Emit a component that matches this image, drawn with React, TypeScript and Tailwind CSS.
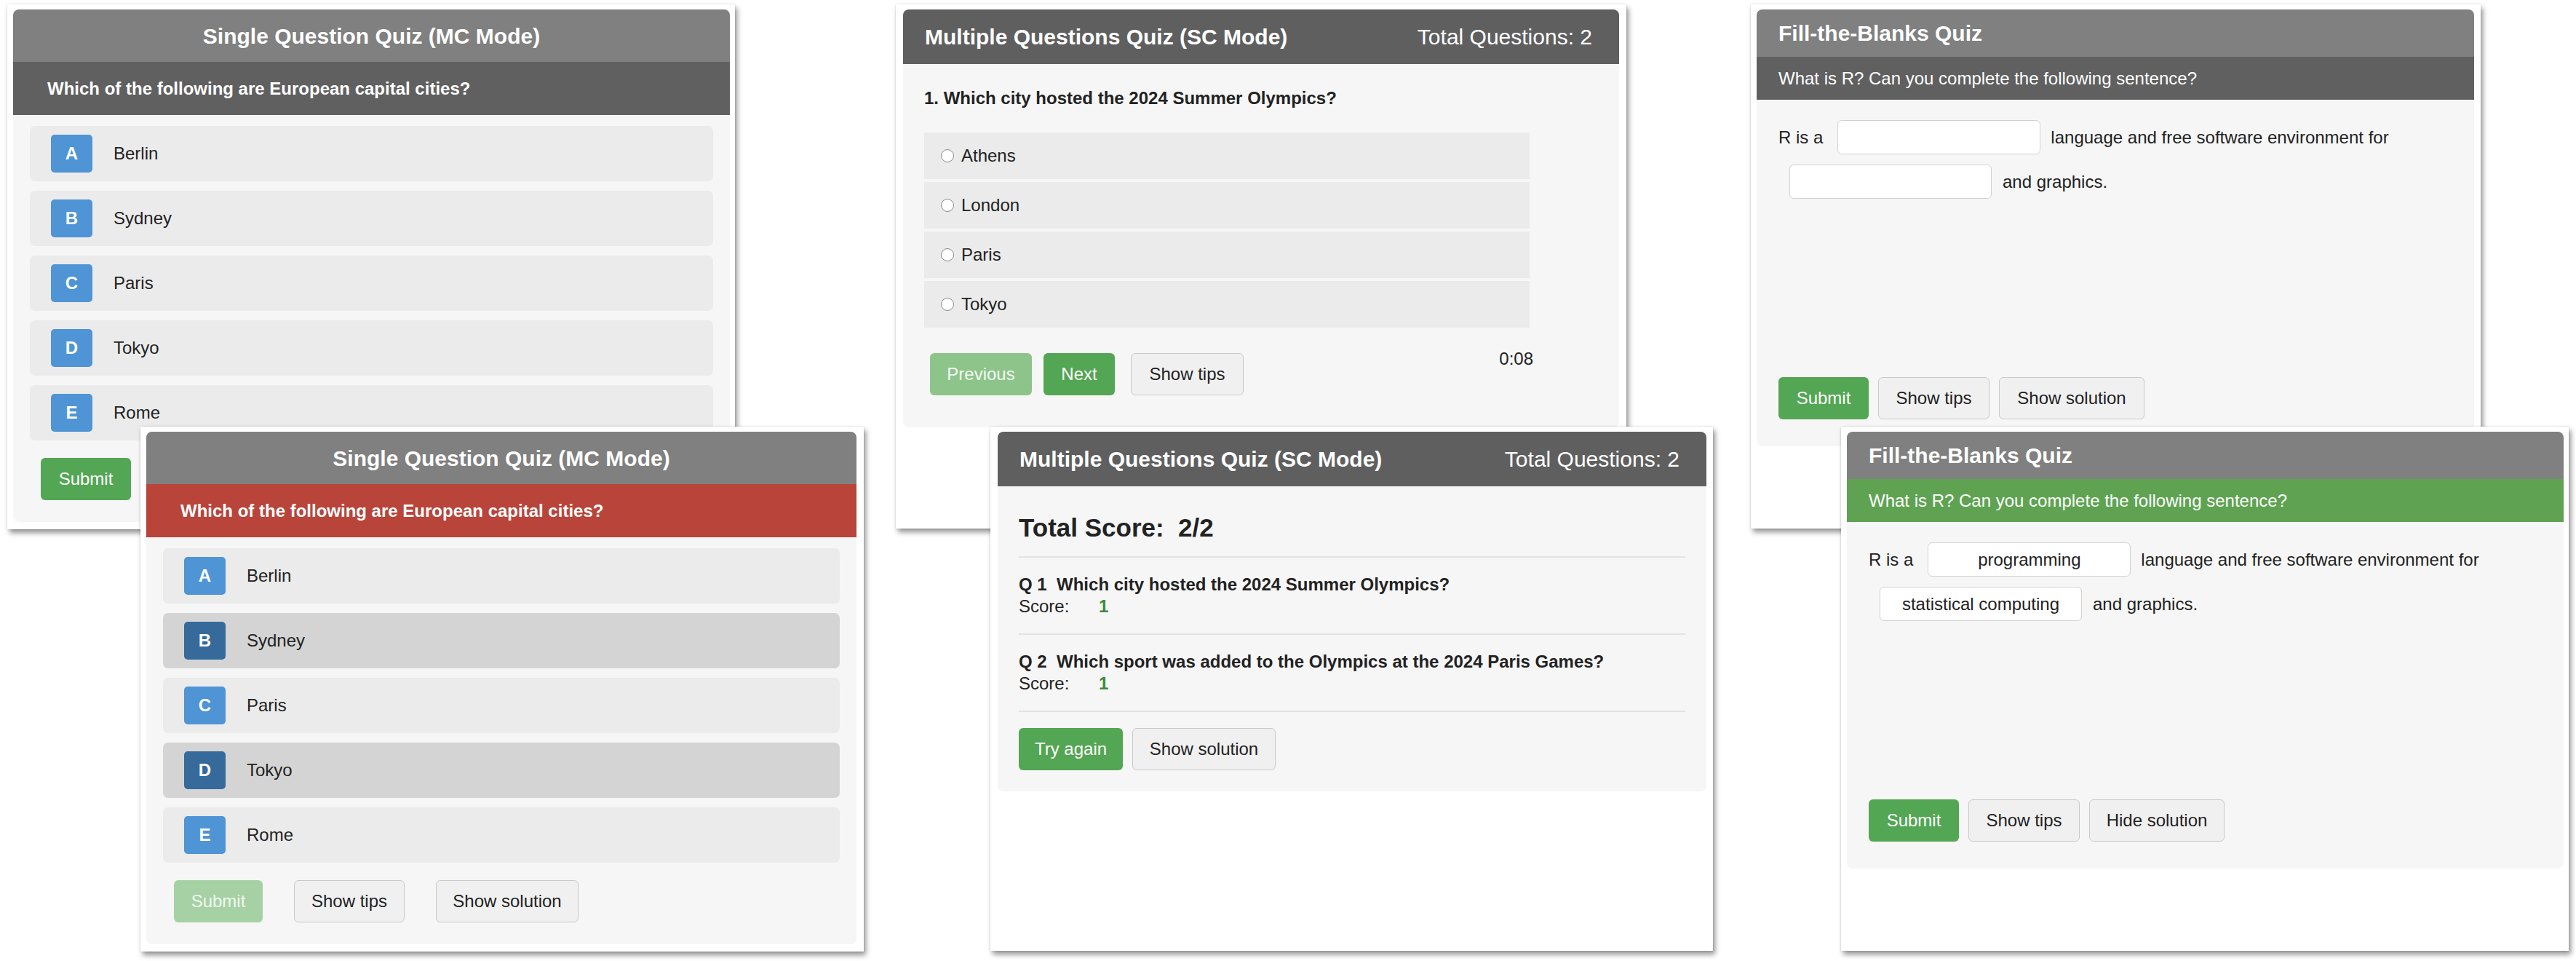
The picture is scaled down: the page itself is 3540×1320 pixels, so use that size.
import React from "react";

type BtnKind = "green" | "faded" | "soft" | "plain";

const btnTone: Record<BtnKind, string> = {
  green: "bg-[#53a653] text-white",
  faded: "bg-[#a6d1a4] text-[#f2f8f1]",
  soft: "bg-[#8cc48a] text-[#f4faf3]",
  plain: "bg-[#f0f0f0] border border-[#c9c9c9] text-[#222]",
};

function Btn({ label, kind = "plain", w }: { label: string; kind?: BtnKind; w: string }) {
  return (
    <button
      className={`h-[58px] rounded-[6px] text-[24px] flex items-center justify-center shrink-0 ${btnTone[kind]} ${w}`}
    >
      {label}
    </button>
  );
}

// white screenshot frame with the drop shadow around each widget
function Frame({ pos, children }: { pos: string; children: React.ReactNode }) {
  return (
    <div
      className={`absolute bg-white pt-[7px] shadow-[0_0_2px_rgba(0,0,0,0.18),3px_5px_7px_rgba(0,0,0,0.42)] ${pos}`}
    >
      {children}
    </div>
  );
}

const CITIES = ["Berlin", "Sydney", "Paris", "Tokyo", "Rome"];
const LETTERS = ["A", "B", "C", "D", "E"];

function SingleQuiz({
  width,
  barTone,
  picked = [],
  children,
}: {
  width: string;
  barTone: string;
  picked?: number[];
  children: React.ReactNode;
}) {
  return (
    <div className={`rounded-[8px] overflow-hidden bg-[#f6f6f6] pb-[30px] ${width}`}>
      <div className="h-[72px] bg-[#808080] flex items-center justify-center text-white text-[30px] font-bold">
        Single Question Quiz (MC Mode)
      </div>
      <div className={`h-[73px] flex items-center pl-[47px] text-white text-[24px] font-bold ${barTone}`}>
        Which of the following are European capital cities?
      </div>
      <div className="px-[23px] pt-[15px] flex flex-col gap-[13px]">
        {CITIES.map((city, i) => {
          const on = picked.includes(i);
          return (
            <div
              key={city}
              className={`h-[76px] rounded-[7px] flex items-center pl-[29px] ${on ? "bg-[#d4d4d4]" : "bg-[#ebebeb]"}`}
            >
              <span
                className={`w-[57px] h-[52px] rounded-[5px] flex items-center justify-center text-white text-[24px] font-bold ${
                  on ? "bg-[#356a9b]" : "bg-[#4f94d5]"
                }`}
              >
                {LETTERS[i]}
              </span>
              <span className="ml-[29px] text-[24px] text-[#222]">{city}</span>
            </div>
          );
        })}
      </div>
      <div className="mt-[24px] pl-[38px] flex gap-[43px]">{children}</div>
    </div>
  );
}

function MultiHeader() {
  return (
    <div className="h-[75px] bg-[#5f5f5f] flex items-center justify-between pl-[30px] pr-[37px] text-white text-[30px]">
      <span className="font-bold">Multiple Questions Quiz (SC Mode)</span>
      <span>Total Questions: 2</span>
    </div>
  );
}

function MultiQuiz() {
  return (
    <div className="w-[984px] rounded-[8px] overflow-hidden bg-[#f6f6f6] pb-[44px]">
      <MultiHeader />
      <div className="pl-[29px] pt-[31px]">
        <div className="text-[24px] leading-[32px] font-bold text-[#222]">
          1. Which city hosted the 2024 Summer Olympics?
        </div>
        <div className="mt-[31px] w-[832px] flex flex-col gap-[4px]">
          {["Athens", "London", "Paris", "Tokyo"].map((c) => (
            <div key={c} className="h-[64px] bg-[#ebebeb] flex items-center pl-[23px]">
              <span className="w-[18px] h-[18px] rounded-full border border-[#8a8a8a] bg-white" />
              <span className="ml-[10px] text-[24px] text-[#222]">{c}</span>
            </div>
          ))}
        </div>
        <div className="mt-[35px] w-[837px] flex items-start pl-[8px]">
          <Btn label="Previous" kind="soft" w="w-[140px]" />
          <div className="ml-[16px]">
            <Btn label="Next" kind="green" w="w-[98px]" />
          </div>
          <div className="ml-[22px]">
            <Btn label="Show tips" w="w-[155px]" />
          </div>
          <span className="ml-auto -mt-[8px] text-[24px] leading-[32px] text-[#222]">0:08</span>
        </div>
      </div>
    </div>
  );
}

function QuizResult() {
  const rows = [
    "Which city hosted the 2024 Summer Olympics?",
    "Which sport was added to the Olympics at the 2024 Paris Games?",
  ];
  return (
    <div className="w-[974px] rounded-[8px] overflow-hidden bg-[#f6f6f6] pb-[29px]">
      <MultiHeader />
      <div className="px-[29px] pt-[36px]">
        <div className="text-[35px] leading-[42px] font-bold text-[#222]">Total Score:&nbsp; 2/2</div>
        <div className="mt-[18px] h-[2px] bg-[#e2e2e2]" />
        {rows.map((q, i) => (
          <div key={q}>
            <div className="py-[22px] text-[24px] leading-[30px] text-[#222]">
              <div className="font-bold">
                Q {i + 1}&nbsp;&nbsp;{q}
              </div>
              <div className="flex">
                <span className="w-[110px]">Score:</span>
                <span className="font-bold text-[#3d8b37]">1</span>
              </div>
            </div>
            <div className="h-[2px] bg-[#e2e2e2]" />
          </div>
        ))}
        <div className="mt-[22px] flex gap-[13px]">
          <Btn label="Try again" kind="green" w="w-[143px]" />
          <Btn label="Show solution" w="w-[197px]" />
        </div>
      </div>
    </div>
  );
}

function Blank({ value, w }: { value: string; w: string }) {
  return (
    <input
      readOnly
      value={value}
      className={`h-[47px] rounded-[6px] border border-[#d2d2d2] bg-white text-center text-[24px] text-[#222] outline-none ${w}`}
    />
  );
}

function BlanksQuiz({
  width,
  barTone,
  answers,
  last,
}: {
  width: string;
  barTone: string;
  answers: [string, string];
  last: React.ReactNode;
}) {
  return (
    <div className={`rounded-[8px] overflow-hidden bg-[#f6f6f6] pb-[37px] ${width}`}>
      <div className="h-[65px] bg-[#808080] flex items-center pl-[30px] text-white text-[30px] font-bold">
        Fill-the-Blanks Quiz
      </div>
      <div className={`h-[59px] flex items-center pl-[30px] text-white text-[24px] ${barTone}`}>
        What is R? Can you complete the following sentence?
      </div>
      <div className="pl-[30px] pt-[28px] text-[24px] text-[#222]">
        <div className="flex items-center">
          <span>R is a</span>
          <span className="ml-[20px]">
            <Blank value={answers[0]} w="w-[279px]" />
          </span>
          <span className="ml-[14px]">language and free software environment for</span>
        </div>
        <div className="mt-[14px] flex items-center">
          <span className="ml-[15px]">
            <Blank value={answers[1]} w="w-[278px]" />
          </span>
          <span className="ml-[15px]">and graphics.</span>
        </div>
        <div className="mt-[245px] flex gap-[13px]">
          <Btn label="Submit" kind="green" w="w-[124px]" />
          <Btn label="Show tips" w="w-[153px]" />
          {last}
        </div>
      </div>
    </div>
  );
}

export default function App() {
  return (
    <div className="relative w-[3540px] h-[1320px] bg-white overflow-hidden font-['Liberation_Sans',Arial,sans-serif]">
      <Frame pos="left-[10px] top-[6px] w-[1000px] h-[721px] pl-[8px]">
        <SingleQuiz width="w-[985px]" barTone="bg-[#606060]">
          <Btn label="Submit" kind="green" w="w-[124px]" />
        </SingleQuiz>
      </Frame>

      <Frame pos="left-[193px] top-[586px] w-[994px] h-[721px] pl-[8px]">
        <SingleQuiz width="w-[976px]" barTone="bg-[#b8443a]" picked={[1, 3]}>
          <Btn label="Submit" kind="faded" w="w-[122px]" />
          <Btn label="Show tips" w="w-[152px]" />
          <Btn label="Show solution" w="w-[196px]" />
        </SingleQuiz>
      </Frame>

      <Frame pos="left-[1231px] top-[6px] w-[1004px] h-[720px] pl-[10px]">
        <MultiQuiz />
      </Frame>

      <Frame pos="left-[1361px] top-[586px] w-[993px] h-[720px] pl-[10px]">
        <QuizResult />
      </Frame>

      <Frame pos="left-[2406px] top-[6px] w-[1003px] h-[720px] pl-[8px]">
        <BlanksQuiz
          width="w-[986px]"
          barTone="bg-[#606060]"
          answers={["", ""]}
          last={<Btn label="Show solution" w="w-[200px]" />}
        />
      </Frame>

      <Frame pos="left-[2530px] top-[586px] w-[1000px] h-[720px] pl-[8px]">
        <BlanksQuiz
          width="w-[985px]"
          barTone="bg-[#5fa352]"
          answers={["programming", "statistical computing"]}
          last={<Btn label="Hide solution" w="w-[186px]" />}
        />
      </Frame>
    </div>
  );
}
